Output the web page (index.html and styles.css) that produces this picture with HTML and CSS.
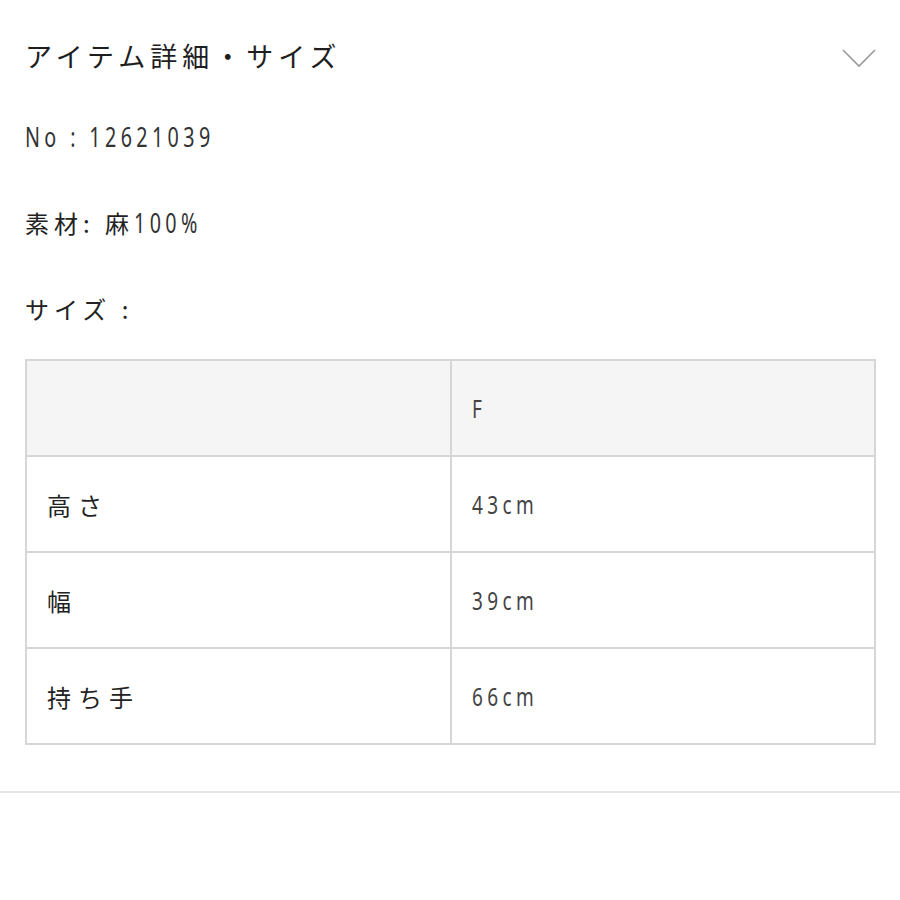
FILE: index.html
```html
<!DOCTYPE html>
<html lang="ja">
<head>
  <meta charset="UTF-8">
  <meta name="viewport" content="width=device-width, initial-scale=1">
  <title>アイテム詳細・サイズ</title>
  <link rel="stylesheet" href="styles.css">
</head>
<body>

  <section class="detail">
    <div class="detail-header">
      <h2>アイテム詳細・サイズ</h2>
      <svg class="chevron" width="34" height="20" viewBox="0 0 34 20">
        <polyline points="1,2 17,18 33,2" fill="none" stroke="#9a9a9a" stroke-width="1.6"/>
      </svg>
    </div>

    <div class="detail-body">
      <p class="spec"><span class="num">No : 12621039</span></p>
      <p class="spec">素材: 麻<span class="num">100%</span></p>
      <p class="spec">サイズ :</p>

      <table class="size-table">
        <tr class="head">
          <td></td>
          <td><span class="num">F</span></td>
        </tr>
        <tr>
          <td>高さ</td>
          <td><span class="num">43cm</span></td>
        </tr>
        <tr>
          <td>幅</td>
          <td><span class="num">39cm</span></td>
        </tr>
        <tr>
          <td>持ち手</td>
          <td><span class="num">66cm</span></td>
        </tr>
      </table>
    </div>
  </section>

  <div class="divider"></div>

</body>
</html>
```

FILE: styles.css
```css
/* Basic Reset */
* { margin: 0; padding: 0; box-sizing: border-box; }
body {
  font-family: "Noto Sans CJK JP", "Noto Sans", sans-serif;
  background: #ffffff;
  color: #222;
}
.detail {
  padding: 0 24px 0 25px;
}
.detail-header {
  height: 94px;
  display: flex;
  justify-content: space-between;
  align-items: center;
  padding-top: 16px;
}
.detail-header h2 {
  font-size: 27px;
  font-weight: 400;
  letter-spacing: 5px;
  color: #1e1e1e;
  line-height: 1;
}
.chevron {
  margin-top: 6px;
}
.spec {
  line-height: 86px;
  font-size: 24px;
  letter-spacing: 5px;
  color: #222;
}
/* narrow digits like the original condensed face */
.num {
  display: inline-block;
  font-family: "Noto Sans", sans-serif;
  font-size: 27px;
  letter-spacing: 6px;
  color: #333;
  transform: scaleX(0.73);
  transform-origin: left center;
}
.size-table {
  width: 100%;
  margin-top: 7px;
  border-collapse: collapse;
  border: 2px solid #d6d6d6;
}
.size-table td {
  width: 50%;
  height: 96px;
  border: 2px solid #d6d6d6;
  padding-left: 20px;
  font-size: 24px;
  letter-spacing: 7px;
  vertical-align: middle;
}
.size-table td .num {
  font-size: 26px;
  letter-spacing: 6px;
  color: #444;
}
.size-table .head td {
  background: #f5f5f5;
}
.divider {
  margin-top: 46px;
  height: 2px;
  background: #e6e6e6;
}
```
